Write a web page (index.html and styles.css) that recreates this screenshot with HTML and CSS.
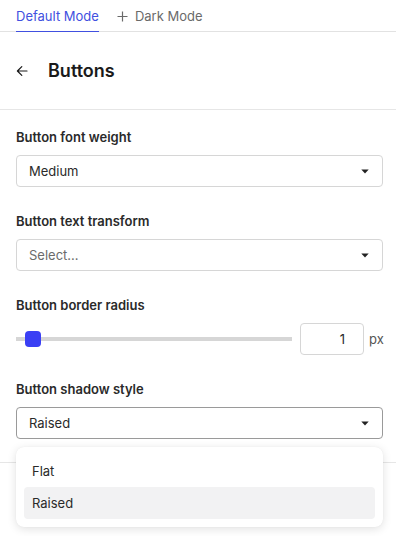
FILE: index.html
```html
<!DOCTYPE html>
<html>
<head>
<meta charset="utf-8">
<link rel="stylesheet" href="styles.css">
</head>
<body>
<div class="page">
  <div class="tabs">
    <div class="tab active">Default Mode</div>
    <div class="tab add">
      <svg class="plus" width="11" height="11" viewBox="0 0 11 11"><path d="M5.5 0.5V10.5M0.5 5.5H10.5" stroke="#6a6a6a" stroke-width="1.2" fill="none"/></svg>
      <span>Dark Mode</span>
    </div>
  </div>
  <div class="header">
    <svg class="back" width="12" height="12" viewBox="0 0 12 12"><path d="M11 6H1.5M5.8 1.6L1.4 6L5.8 10.4" stroke="#1a1a1a" stroke-width="1.2" fill="none" stroke-linecap="round" stroke-linejoin="round"/></svg>
    <h1 class="title">Buttons</h1>
  </div>
  <div class="content">
    <div class="field">
      <div class="label">Button font weight</div>
      <div class="select">
        <span class="value">Medium</span>
        <svg class="caret" width="8" height="5" viewBox="0 0 8 5"><path d="M0.3 0.5H7.7L4 4.6Z" fill="#222"/></svg>
      </div>
    </div>
    <div class="field">
      <div class="label">Button text transform</div>
      <div class="select">
        <span class="value placeholder">Select...</span>
        <svg class="caret" width="8" height="5" viewBox="0 0 8 5"><path d="M0.3 0.5H7.7L4 4.6Z" fill="#222"/></svg>
      </div>
    </div>
    <div class="field">
      <div class="label">Button border radius</div>
      <div class="slider-row">
        <div class="track"><div class="thumb"></div></div>
        <div class="num">1</div>
        <span class="unit">px</span>
      </div>
    </div>
    <div class="field">
      <div class="label">Button shadow style</div>
      <div class="select focused">
        <span class="value">Raised</span>
        <svg class="caret" width="8" height="5" viewBox="0 0 8 5"><path d="M0.3 0.5H7.7L4 4.6Z" fill="#222"/></svg>
      </div>
      <div class="menu">
        <div class="item">Flat</div>
        <div class="item selected">Raised</div>
      </div>
    </div>
  </div>
  <div class="rest"></div>
</div>
</body>
</html>
```
FILE: styles.css
```css
* { box-sizing: border-box; }
html, body { margin: 0; padding: 0; background: #fff; }
body {
  font-family: Inter, "Liberation Sans", sans-serif;
  color: #222;
  width: 396px;
  height: 536px;
  overflow: hidden;
}
.tabs {
  display: flex;
  align-items: stretch;
  height: 32px;
  padding-left: 16px;
  gap: 18px;
  border-bottom: 1px solid #e2e2e2;
}
.tab {
  font-size: 13px;
  line-height: 31px;
  padding-top: 1px;
  color: #6a6a6a;
  display: flex;
  align-items: center;
}
.tab.active {
  color: #4150e0;
  border-bottom: 1px solid #4150e0;
  margin-bottom: -1px;
}
.tab.add { gap: 7px; }
.header {
  height: 78px;
  display: flex;
  align-items: center;
  padding-left: 16px;
  border-bottom: 1px solid #e6e6e6;
}
.back { margin-right: 20px; margin-top: 1px; }
.title {
  margin: 0;
  font-size: 18px;
  font-weight: 600;
  color: #1a1a1a;
  line-height: 24px;
}
.content {
  padding: 19px 13px 23px 16px;
  display: flex;
  flex-direction: column;
  gap: 26px;
  border-bottom: 1px solid #e6e6e6;
}
.field { position: relative; }
.label {
  font-size: 13px;
  font-weight: 600;
  line-height: 16px;
  color: #2a2a2a;
  margin-bottom: 10px;
}
.select {
  height: 32px;
  border: 1px solid #d6d6d6;
  border-radius: 4px;
  display: flex;
  align-items: center;
  justify-content: space-between;
  padding: 0 13px 0 12px;
}
.select.focused { border-color: #9a9a9a; }
.value { font-size: 13px; color: #2a2a2a; }
.value.placeholder { color: #6b6b6b; }
.caret { margin-top: 1px; }
.slider-row {
  display: flex;
  align-items: center;
  height: 32px;
}
.track {
  flex: 1;
  height: 4px;
  background: #d6d6d6;
  position: relative;
  margin-right: 8px;
}
.thumb {
  position: absolute;
  left: 9px;
  top: -6px;
  width: 16px;
  height: 16px;
  border-radius: 4px;
  background: #3a3ff4;
}
.num {
  width: 64px;
  height: 32px;
  border: 1px solid #d6d6d6;
  border-radius: 4px;
  font-size: 13px;
  color: #2a2a2a;
  text-align: right;
  padding-right: 18px;
  line-height: 30px;
}
.unit {
  font-size: 13px;
  color: #555;
  margin-left: 5px;
  width: 14px;
}
.menu {
  position: absolute;
  left: 0;
  right: 0;
  top: 66px;
  background: #fff;
  border-radius: 8px;
  box-shadow: 0 2px 10px rgba(0, 0, 0, 0.12), 0 0 1px rgba(0, 0, 0, 0.08);
  padding: 8px;
  z-index: 5;
}
.item {
  height: 32px;
  line-height: 32px;
  padding-left: 8px;
  font-size: 13px;
  color: #2a2a2a;
  border-radius: 4px;
}
.item.selected { background: #f2f2f3; }
```
